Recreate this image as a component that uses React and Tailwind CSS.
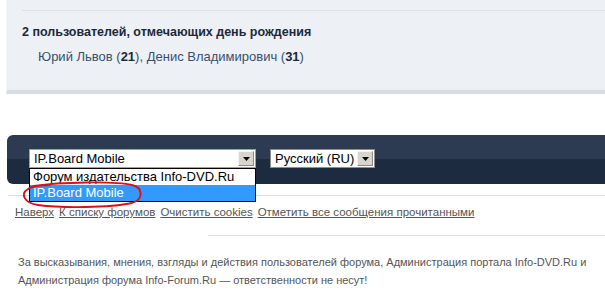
const links = ["Наверх", "К списку форумов", "Очистить cookies", "Отметить все сообщения прочитанными"];

function Arrow() {
  return (
    <div className="w-[16px] h-[15px] bg-[#d8d5ce] border border-t-[#f4f3ef] border-l-[#f4f3ef] border-r-[#8c8a84] border-b-[#8c8a84] flex items-center justify-center">
      <svg width="7" height="4" viewBox="0 0 7 4">
        <path d="M0 0h7L3.5 4z" fill="#000" />
      </svg>
    </div>
  );
}

export default function App() {
  return (
    <div className="relative w-[605px] h-[308px] overflow-hidden bg-white font-['Liberation_Sans',Arial,sans-serif]">

      {/* birthdays */}
      <div className="ml-[6px] h-[94px] bg-[#edf1f6] border-l border-l-[#f3f5f8] border-b-4 border-b-[#d6dde5] pt-[10px]">
        <div className="ml-[15px] border-t border-t-[#dce2ea]" />
        <div className="pl-[15px] pt-[13px] text-[12.5px] font-bold text-[#1c2837] leading-[16px] whitespace-nowrap">
          2 пользователей, отмечающих день рождения
        </div>
        <div className="pl-[31px] pt-[9px] text-[13px] text-[#34506f] leading-[16px] whitespace-nowrap">
          Юрий Львов (<b className="text-[#1c2837]">21</b>), Денис Владимирович (<b className="text-[#1c2837]">31</b>)
        </div>
      </div>

      {/* footer bar */}
      <div className="mt-[41px] ml-[7px] h-[49px] rounded-l-[6px] bg-gradient-to-b from-[#2c3b51] from-50% to-[#1d2b40] to-50% pt-[14px] pl-[22px] flex items-start gap-[14px]">
        <div className="w-[227px] h-[19px] bg-white border border-[#b8a064] flex items-center justify-between pl-[4px] pr-px">
          <span className="text-[13px] leading-[16px] text-black whitespace-nowrap">IP.Board Mobile</span>
          <Arrow />
        </div>
        <div className="w-[105px] h-[19px] bg-white border border-[#8d8d8d] flex items-center justify-between pl-[4px] pr-px">
          <span className="text-[13px] leading-[16px] text-black whitespace-nowrap">Русский (RU)</span>
          <Arrow />
        </div>
      </div>

      <div className="mt-[11px] ml-[8px] border-t border-t-[#dedede]" />

      <div className="mt-[10px] pl-[15px] flex gap-[5px] text-[11.5px] leading-[13px] text-[#555] whitespace-nowrap">
        {links.map((l, i) => (
          <a key={i} className="underline">{l}</a>
        ))}
      </div>

      <div className="mt-[16px] ml-[208px] border-t border-t-[#dedede]" />

      <div className="mt-[17px] pl-[18px] w-[600px] text-[11px] leading-[18px] text-[#555]">
        За высказывания, мнения, взгляды и действия пользователей форума, Администрация портала Info-DVD.Ru и Администрация форума Info-Forum.Ru — ответственности не несут!
      </div>

      {/* open dropdown */}
      <div className="absolute left-[29px] top-[168px] w-[227px] border border-black bg-white text-[13px] leading-[16px]">
        <div className="pl-[3px] text-black">Форум издательства Info-DVD.Ru</div>
        <div className="pl-[3px] bg-[#3399ff] text-white">IP.Board Mobile</div>
      </div>

      <svg className="absolute left-[20px] top-[180px]" width="126" height="30" viewBox="0 0 126 30">
        <path
          d="M14 6 C40 2 95 1 112 5 C124 8 123 20 112 23 C90 28 40 28 18 25 C4 23 0 14 8 9 C12 6 22 5 30 5"
          fill="none"
          stroke="#d8101a"
          strokeWidth="1.8"
          strokeLinecap="round"
        />
      </svg>
    </div>
  );
}
